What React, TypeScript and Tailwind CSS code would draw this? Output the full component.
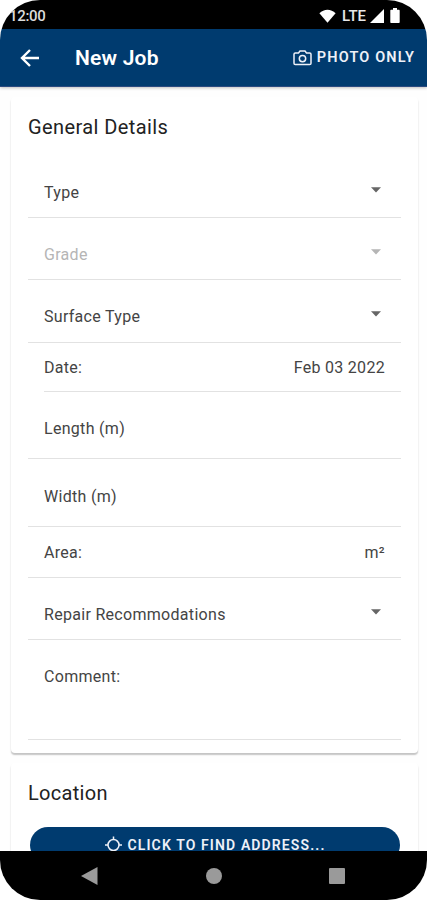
import clsx from "clsx";

const fields = [
  { label: "Type", row: "h-[63px] pb-[14px]", select: true },
  { label: "Grade", row: "h-[62px] pb-[14px]", select: true, disabled: true },
  { label: "Surface Type", row: "h-[63px] pb-[15px]", select: true },
  { label: "Date:", row: "h-[49px] pb-[13px]", value: "Feb 03 2022", inset: true },
  { label: "Length (m)", row: "h-[67px] pb-[19px]" },
  { label: "Width (m)", row: "h-[68px] pb-[19px]" },
  { label: "Area:", row: "h-[51px] pb-[14px]", value: "m²" },
  { label: "Repair Recommodations", row: "h-[62px] pb-[14px]", select: true },
  { label: "Comment:", row: "h-[100px] pb-[52px]" },
];

function StatusBar() {
  return (
    <div className="flex h-[29px] shrink-0 items-center bg-black pr-[27px] pl-[9px] text-white">
      <span className="mt-[3px] text-[15px] leading-5 font-medium tracking-[-0.3px] text-[#dcdcdc]">12:00</span>
      <div className="mt-[2px] ml-auto flex items-center">
        <svg width="17" height="14" viewBox="0 0 17 14" fill="currentColor">
          <path d="M.4 4.200C2.700 2 5.500 .8 8.500 .8s5.800 1.200 8.100 3.400L8.500 13.800z" />
        </svg>
        <span className="ml-[6px] text-[15px] leading-5 font-medium text-[#e8e8e8]">LTE</span>
        <svg className="ml-[4px]" width="14" height="14" viewBox="0 0 14 14" fill="currentColor">
          <path d="M0 14 14 0v14z" />
        </svg>
        <svg className="ml-[6px]" width="10" height="15" viewBox="0 0 10 15" fill="currentColor">
          <path d="M3 0h4v1.700h1.700c.6 0 1 .4 1 1V14c0 .6-.4 1-1 1H1.300c-.6 0-1-.4-1-1V2.700c0-.6.4-1 1-1H3z" />
        </svg>
      </div>
    </div>
  );
}

function Header() {
  return (
    <header className="z-10 flex h-[58px] shrink-0 items-center border-b border-[#2a4a80] bg-[#003b6f] pt-px pr-[12px] pl-[20px] text-white shadow-[0_1px_3px_rgba(0,0,0,0.25)]">
      <svg width="19" height="18" viewBox="0 0 19 18" fill="none" stroke="currentColor" strokeWidth="2.400">
        <path d="M19 9H2M10 1 2 9l8 8" />
      </svg>
      <h1 className="ml-[36px] text-[21px] leading-6 font-semibold tracking-[0.2px]">New Job</h1>
      <button className="ml-auto flex items-center text-[14.500px] leading-5 font-semibold tracking-[1.150px] text-[#eef1f8]">
        <svg className="mr-[5px]" width="19" height="16" viewBox="0 0 19 16" fill="none" stroke="currentColor" strokeWidth="1.500">
          <path d="M2.300 3h3.200L7 1h5l1.500 2h3.200c.8 0 1.300.5 1.300 1.300v8.900c0 .8-.5 1.300-1.300 1.300H2.300c-.8 0-1.300-.5-1.300-1.300V4.300C1 3.500 1.500 3 2.300 3z" />
          <circle cx="9.500" cy="8.600" r="3.200" />
        </svg>
        PHOTO ONLY
      </button>
    </header>
  );
}

function NavBar() {
  return (
    <nav className="flex h-[49px] shrink-0 items-center bg-black pr-[82px] pl-[81px] text-[#9a9a9a]">
      <svg width="17" height="18" viewBox="0 0 17 18" fill="currentColor">
        <path d="M0 9 16.500 0v18z" />
      </svg>
      <span className="ml-[108px] size-4 rounded-full bg-current" />
      <span className="ml-auto size-4 rounded-[1px] bg-current" />
    </nav>
  );
}

const cardShadow = "shadow-[0_2px_1px_rgba(0,0,0,0.12),0_2px_2px_rgba(0,0,0,0.12)]";

export default function App() {
  return (
    <div className="h-[900px] w-[427px] bg-white font-['Roboto',sans-serif]">
      <div className="flex h-full flex-col overflow-hidden rounded-[40px]">
        <StatusBar />
        <Header />

        <main className="flex min-h-0 flex-1 flex-col gap-[10px] overflow-hidden bg-[#fefefe] px-[11px] pt-[10px]">
          <section className={clsx("h-[656px] w-[407px] shrink-0 rounded-[4px] bg-white px-[17px]", cardShadow)}>
            <h2 className="flex h-[58px] items-center pt-px text-[20px] leading-6 tracking-[0.4px] text-[#222]">
              General Details
            </h2>
            {fields.map((field) => (
              <div
                key={field.label}
                className={clsx(
                  "flex items-end border-b border-[#e2e2e2] text-[16px] leading-5 tracking-[0.3px]",
                  field.row,
                  field.inset ? "ml-[16px]" : "pl-[16px]",
                  field.disabled ? "text-[#b5b5b5]" : "text-[#444]",
                )}
              >
                <span>{field.label}</span>
                {field.value && <span className="mr-[16px] ml-auto">{field.value}</span>}
                {field.select && (
                  <svg className="mr-[20px] mb-[10px] ml-auto" width="10" height="6" viewBox="0 0 10 6">
                    <path d="M0 .3h10L5 5.500z" fill={field.disabled ? "#b5b5b5" : "#666"} />
                  </svg>
                )}
              </div>
            ))}
          </section>

          <section className={clsx("h-[200px] w-[407px] shrink-0 rounded-[4px] bg-white px-[17px]", cardShadow)}>
            <h2 className="flex h-[64px] items-center pb-[4px] text-[20px] leading-6 tracking-[0.3px] text-[#222]">
              Location
            </h2>
            <button className="ml-[2px] flex h-[36px] w-[370px] items-center justify-center rounded-full bg-[#003b6f] text-[14px] leading-5 font-semibold tracking-[1.120px] text-[#eef1f8]">
              <svg className="mr-[6px]" width="17" height="18" viewBox="0 0 17 18" fill="none" stroke="currentColor" strokeWidth="1.500">
                <circle cx="8.500" cy="9" r="5.500" />
                <path d="M8.500 .5v3M8.500 14.500v3M0 9h3M14 9h3" />
              </svg>
              CLICK TO FIND ADDRESS...
            </button>
          </section>
        </main>

        <NavBar />
      </div>
    </div>
  );
}
